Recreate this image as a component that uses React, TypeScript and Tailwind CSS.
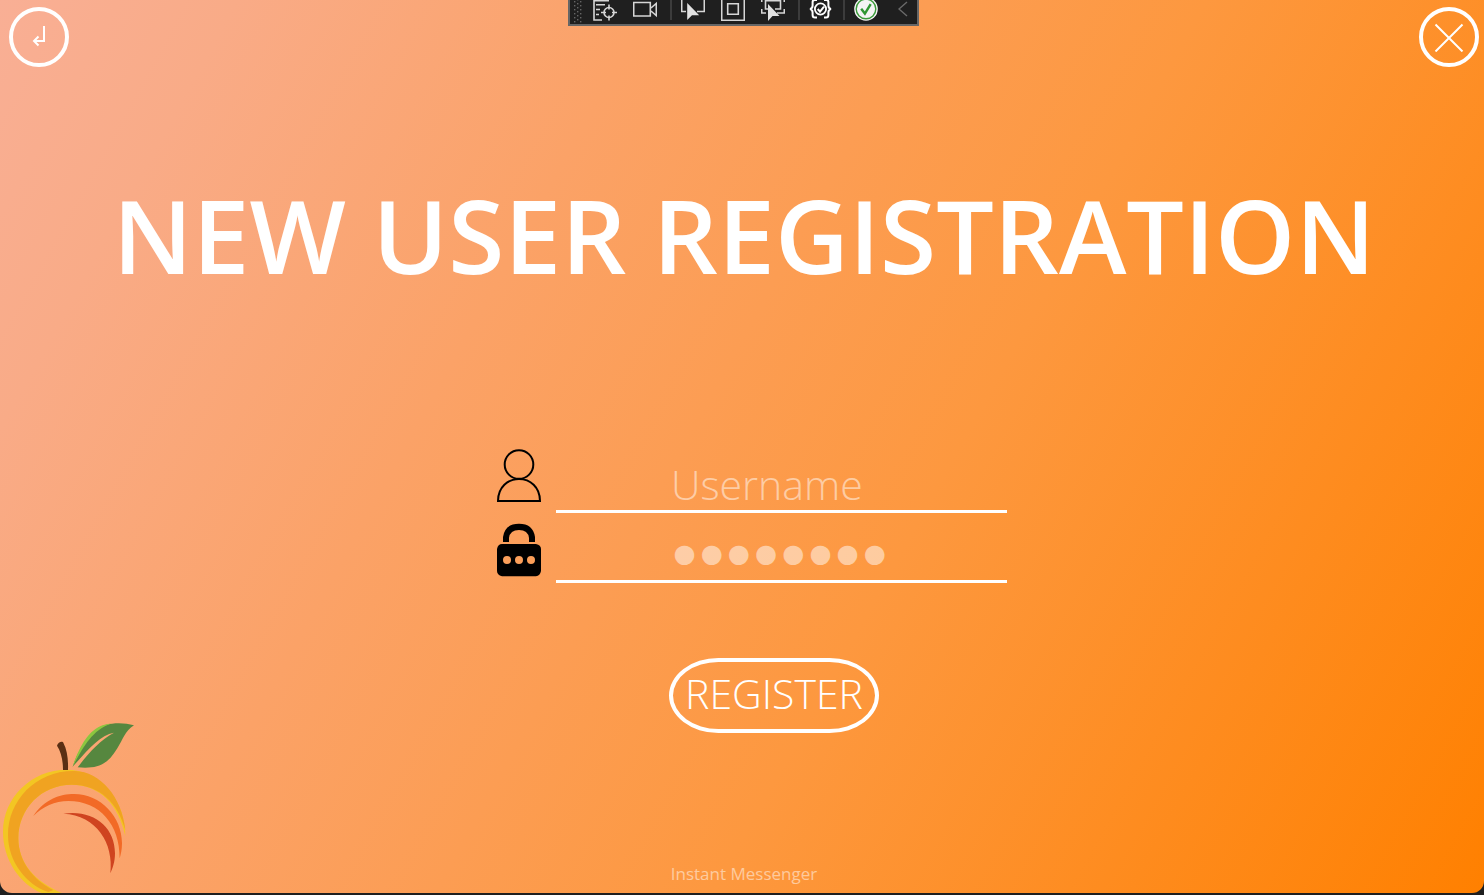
import type { ReactNode } from "react";

function ToolButton({ label, children }: { label: string; children: ReactNode }) {
  return (
    <button type="button" aria-label={label} className="shrink-0">
      <svg width="24" height="24" viewBox="0 0 24 24" fill="none" stroke="#d6d6d6" strokeWidth="1.6">
        {children}
      </svg>
    </button>
  );
}

function Divider() {
  return <span className="h-5 w-0.5 shrink-0 bg-[#3c3c3c]" />;
}

function DebugToolbar() {
  return (
    <div
      role="toolbar"
      aria-label="Debug tools"
      className="absolute top-0 left-1/2 flex h-[26px] w-[351px] -translate-x-[174px] items-start border-x-2 border-b-2 border-[#666666] bg-[#1f1f1f] pl-1"
    >
      <svg width="9" height="24" viewBox="0 0 9 24" className="mr-2.5 shrink-0" fill="#666666">
        {[0, 4, 8, 12, 16, 20].map((y) => (
          <g key={y}>
            <rect x="0" y={y + 1} width="1.4" height="1.4" />
            <rect x="6" y={y + 1} width="1.4" height="1.4" />
            <rect x="3" y={y - 1} width="1.4" height="1.4" />
          </g>
        ))}
      </svg>
      <div className="flex items-start gap-4">
        <ToolButton label="Live visual tree">
          <path d="M16 .8H1V20h8M3 4.8h9M3 9.500h4M3 14.500h3" />
          <circle cx="16" cy="12.5" r="5" />
          <path d="M16 4.500v5M16 15.500v5M8 12.500h5M19 12.500h5" />
        </ToolButton>
        <ToolButton label="Record">
          <path d="M.7 2.500h16.600v13.500H.7zM18 8l5.300-4.500V15.500L18 11" />
        </ToolButton>
      </div>
      <div className="flex items-start pl-[13px]">
        <Divider />
      </div>
      <div className="flex items-start gap-4 pl-[9px]">
        <ToolButton label="Select element">
          <path d="M.7 0v11.500H5M16 11.500h7.300V0" />
          <path d="M6.200 3v17l4.800-4.800h7.200z" fill="#e2e2e2" stroke="none" />
        </ToolButton>
        <ToolButton label="Layout adorners">
          <path d="M.7 0v20.300h22.600V0M6.700 3.700h10.600v10.600H6.700z" />
        </ToolButton>
        <ToolButton label="Track focused element">
          <path d="M4.500 0v9H7M4.500 .8h15M19.500 0v9H14M.7 9v4H5M23.300 9v4H16M.7 0v2M23.300 0v2" />
          <path d="M7 4v17l4.500-5h7z" fill="#e2e2e2" stroke="none" />
        </ToolButton>
      </div>
      <div className="flex items-start pl-[13px]">
        <Divider />
      </div>
      <div className="flex items-start pl-[9px]">
        <ToolButton label="Binding failures">
          <path
            d="M8 0H6Q3.600 0 3.600 2v3.500Q3.600 8.500 1 9q2.600.5 2.600 3.500V15q0 2.500 2.400 2.500H8M15 0h2q2.400 0 2.400 2v3.500q0 3 2.600 3.500-2.600.5-2.600 3.500V15q0 2.500-2.400 2.500H15"
            stroke="#fff"
            strokeWidth="2"
          />
          <circle cx="11.5" cy="9" r="5.6" stroke="#fff" strokeWidth="1.8" />
          <path d="m8.700 9 2.300 2.600 4-5" stroke="#fff" strokeWidth="2" />
        </ToolButton>
      </div>
      <div className="flex items-start pl-2.5">
        <Divider />
      </div>
      <div className="flex items-start pl-[9px]">
        <ToolButton label="Hot reload">
          <circle cx="12" cy="9" r="11.8" fill="#f4f4f4" stroke="none" />
          <circle cx="12" cy="9" r="9.8" stroke="#3a9a3a" strokeWidth="1.4" />
          <path d="m7.200 8.800 3.700 4.800 5.800-9.400" stroke="#2f9632" strokeWidth="2.4" />
        </ToolButton>
      </div>
      <div className="flex items-start pl-5">
        <button type="button" aria-label="Collapse toolbar">
          <svg width="10" height="24" viewBox="0 0 10 24" fill="none" stroke="#6a6a6a" strokeWidth="1.4">
            <path d="M9 2 1 9l8 7" />
          </svg>
        </button>
      </div>
    </div>
  );
}

function Peach() {
  return (
    <svg
      width="150"
      height="183"
      viewBox="0 0 450 549"
      className="pointer-events-none absolute bottom-0 left-0"
      aria-hidden="true"
    >
      <path
        fill="#f3c623"
        d="M376 378C378 268 295 179 200 179C95 179 9 262 9 365C9 450 60 522 125 549H185C105 515 55 460 55 385C55 295 125 224 215 224C300 224 356 285 376 378Z"
      />
      <path
        fill="#f0a321"
        d="M376 360C366 260 300 185 225 183C110 180 24 270 24 375C24 455 80 525 145 546L160 540C100 510 55 455 55 385C55 295 125 224 215 224C300 224 354 280 376 360Z"
      />
      <path
        fill="#f26a26"
        d="M100 318C133 268 180 252 222 252C302 252 366 320 366 400C366 420 362 435 359 445C360 345 300 273 205 273C165 273 127 290 100 318Z"
      />
      <path fill="#cf4420" d="M190 311C280 298 345 350 345 430C345 455 338 475 331 490C342 400 290 316 190 311Z" />
      <path fill="#5a2f14" d="M171 107C174 95 188 93 190 98C202 120 205 150 204 180H189C189 150 183 125 171 107Z" />
      <path
        fill="#56873f"
        d="M218 170C240 110 270 60 315 45C345 37 375 38 402 46C375 62 368 90 352 115C325 160 298 178 233 172C265 130 300 90 342 68C300 75 268 115 218 170Z"
      />
      <path fill="#8cc63f" d="M218 170C238 110 265 60 310 45L335 40C274 62 250 112 218 170Z" />
    </svg>
  );
}

function UserIcon() {
  return (
    <svg width="44" height="54" viewBox="0 0 44 54" fill="none" stroke="#000" strokeWidth="2" aria-hidden="true">
      <circle cx="22" cy="15.5" r="14.3" />
      <path d="M1 52C1 38 11 30 22 30S43 38 43 52Z" />
    </svg>
  );
}

function LockIcon() {
  return (
    <svg width="44" height="54" viewBox="0 0 44 54" aria-hidden="true">
      <path d="M6 19V14Q8 .8 22 .8T38 14V19H32V15Q31 7 22 7T12 15V19Z" />
      <path
        fillRule="evenodd"
        d="M5 21H39Q44 22 44 26V48Q43 53 39 53.300H5Q0 52 0 48V26Q1 21 5 21ZM10 33a4 4 0 1 0 0 8a4 4 0 1 0 0-8ZM22 33a4 4 0 1 0 0 8a4 4 0 1 0 0-8ZM34 33a4 4 0 1 0 0 8a4 4 0 1 0 0-8Z"
      />
    </svg>
  );
}

const roundButton = "flex size-[60px] items-center justify-center rounded-full border-4 border-white";
const field =
  "w-full border-b-[3px] border-white bg-transparent pl-[115px] font-light text-white outline-none placeholder:text-white/50";

export default function App() {
  return (
    <div className="flex min-h-screen flex-col bg-[#1f1f1f] pb-0.5 font-['Open_Sans','Noto_Sans',sans-serif]">
      <div className="relative flex grow flex-col overflow-hidden rounded-b-xl bg-[linear-gradient(119deg,#f9af95_0%,#f9ab87_12%,#fba267_33%,#fd983f_61%,#ff8000_100%)] pl-1 text-white">
        <header className="flex justify-between px-[5px] pt-[7px]">
          <button type="button" aria-label="Back" className={roundButton}>
            <svg width="14" height="22" viewBox="0 0 14 22" fill="none" stroke="#fff" strokeWidth="2">
              <path d="M12 0V15H2M6.500 10.500L2 15L6.500 19.500" />
            </svg>
          </button>
          <button type="button" aria-label="Close" className={roundButton}>
            <svg width="30" height="30" viewBox="0 0 30 30" fill="none" stroke="#fff" strokeWidth="2">
              <path d="M1.500 2.500L28.500 29.500M28.500 2.500L1.500 29.500" />
            </svg>
          </button>
        </header>

        <DebugToolbar />

        <main className="flex flex-col items-center">
          <h1 className="mt-[98px] text-center text-[102px] leading-[140px] font-semibold">NEW USER REGISTRATION</h1>
          <form className="mt-36 ml-4 w-[510px]" onSubmit={(e) => e.preventDefault()}>
            <div className="flex gap-[15px]">
              <label htmlFor="username" aria-label="Username">
                <UserIcon />
              </label>
              <input
                id="username"
                type="text"
                placeholder="Username"
                className={`${field} h-16 min-w-0 flex-1 pt-2 text-[41px]`}
              />
            </div>
            <div className="mt-2.5 flex gap-[15px]">
              <label htmlFor="password" aria-label="Password">
                <LockIcon />
              </label>
              <input
                id="password"
                type="password"
                placeholder="●●●●●●●●"
                className={`${field} h-[60px] min-w-0 flex-1 pt-0.5 font-['DejaVu_Sans',sans-serif] text-[45px]`}
              />
            </div>
            <button
              type="submit"
              className="mt-[75px] ml-[172px] flex h-[75px] w-[210px] items-center justify-center rounded-[50px/38px] border-4 border-white pb-1 text-[41px] leading-none font-light"
            >
              REGISTER
            </button>
          </form>
        </main>

        <Peach />

        <footer className="mt-auto pb-[5px] text-center text-[17px] leading-7 text-white/50">Instant Messenger</footer>
      </div>
    </div>
  );
}
